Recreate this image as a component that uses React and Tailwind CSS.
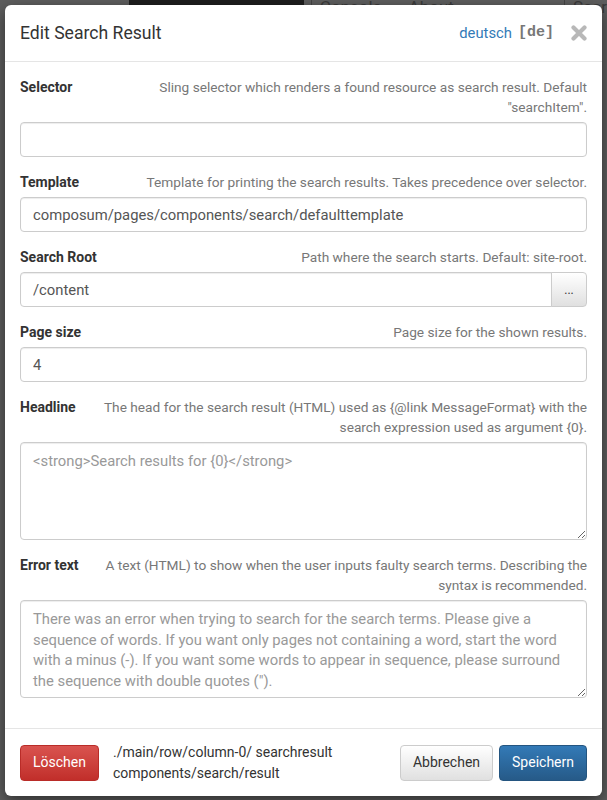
import React from "react";

const font = { fontFamily: "Roboto, 'Liberation Sans', sans-serif" };

// Label on the left, help text pushed to the right
function FieldLabel({ label, hint }) {
  return (
    <div className="flex items-start mb-[5px] leading-[20px]">
      <label className="font-bold text-[14px] text-[#333] shrink-0">{label}</label>
      <span className="flex-1 text-right text-[13.7px] text-[#777] ml-5">{hint}</span>
    </div>
  );
}

function TextInput({ value }) {
  return (
    <input
      type="text"
      defaultValue={value}
      className="block w-full h-[35px] px-3 text-[14.8px] text-[#555] bg-white border border-[#ccc] rounded-[4px] shadow-[inset_0_1px_1px_rgba(0,0,0,0.075)] outline-none"
    />
  );
}

function TextArea({ placeholder }) {
  return (
    <textarea
      placeholder={placeholder}
      className="block w-full h-[98px] px-3 pt-[8px] text-[14.8px] leading-[20.7px] text-[#555] placeholder:text-[#999] bg-white border border-[#ccc] rounded-[4px] shadow-[inset_0_1px_1px_rgba(0,0,0,0.075)] outline-none"
    />
  );
}

function CloseIcon() {
  return (
    <svg width="16" height="16" viewBox="0 0 16 16">
      <path d="M2.5 2.5 L13.5 13.5 M13.5 2.5 L2.5 13.5" stroke="#b8b8b8" strokeWidth="4.2" strokeLinecap="round" />
    </svg>
  );
}

export default function App() {
  return (
    <div className="w-[607px] h-[800px] bg-[#5e5e5e] overflow-hidden relative" style={font}>
      {/* dimmed page behind the dialog */}
      <div className="h-[14px] flex items-end text-[#3a3a3a] text-[17px] leading-[14px]">
        <div className="w-[140px]" />
        <div className="w-[190px] h-full bg-[#1e1e1e]" />
        <span className="ml-[7px] pl-[8px] border-l border-[#444]">Console</span>
        <span className="ml-[27px]">About</span>
        <span className="ml-[110px] pl-[8px] border-l border-[#444]">Sear</span>
      </div>

      <div className="absolute left-[5px] top-[5px] w-[597px] h-[791px] bg-white rounded-[6px] shadow-[0_5px_15px_rgba(0,0,0,0.5)] flex flex-col">
        {/* header */}
        <div className="flex items-center px-[15px] h-[57px] border-b border-[#e5e5e5]">
          <h4 className="text-[17.6px] text-[#333] flex-1">Edit Search Result</h4>
          <a className="text-[14.8px] text-[#337ab7] mr-[6px]">deutsch</a>
          <span className="text-[15px] font-bold text-[#777] mr-[17px]" style={{ fontFamily: "'Liberation Mono', monospace" }}>
            [de]
          </span>
          <CloseIcon />
        </div>

        {/* body */}
        <div className="px-[15px] pt-[15px] flex-1">
          <div className="mb-[15px]">
            <FieldLabel
              label="Selector"
              hint={'Sling selector which renders a found resource as search result. Default "searchItem".'}
            />
            <TextInput value="" />
          </div>
          <div className="mb-[15px]">
            <FieldLabel label="Template" hint="Template for printing the search results. Takes precedence over selector." />
            <TextInput value="composum/pages/components/search/defaulttemplate" />
          </div>
          <div className="mb-[15px]">
            <FieldLabel label="Search Root" hint="Path where the search starts. Default: site-root." />
            <div className="flex">
              <input
                type="text"
                defaultValue="/content"
                className="flex-1 h-[35px] px-3 text-[14.8px] text-[#555] border border-[#ccc] rounded-l-[4px] shadow-[inset_0_1px_1px_rgba(0,0,0,0.075)] outline-none"
              />
              <button className="w-[36px] h-[35px] -ml-px text-[12px] text-[#333] border border-[#ccc] rounded-r-[4px] bg-gradient-to-b from-white to-[#e0e0e0]">
                ...
              </button>
            </div>
          </div>
          <div className="mb-[15px]">
            <FieldLabel label="Page size" hint="Page size for the shown results." />
            <TextInput value="4" />
          </div>
          <div className="mb-[15px]">
            <FieldLabel
              label="Headline"
              hint="The head for the search result (HTML) used as {@link MessageFormat} with the search expression used as argument {0}."
            />
            <TextArea placeholder="<strong>Search results for {0}</strong>" />
          </div>
          <div className="mb-[15px]">
            <FieldLabel
              label="Error text"
              hint="A text (HTML) to show when the user inputs faulty search terms. Describing the syntax is recommended."
            />
            <TextArea placeholder={'There was an error when trying to search for the search terms. Please give a sequence of words. If you want only pages not containing a word, start the word with a minus (-). If you want some words to appear in sequence, please surround the sequence with double quotes (").'} />
          </div>
        </div>

        {/* footer */}
        <div className="flex items-center px-[15px] h-[68px] border-t border-[#e5e5e5]">
          <button className="h-[36px] px-3 text-[14px] text-white rounded-[4px] border border-[#b92c28] bg-gradient-to-b from-[#d9534f] to-[#c12e2a]">
            Löschen
          </button>
          <div className="ml-[14px] flex-1 text-[14px] leading-[21px] text-[#333]">
            <div>./main/row/column-0/ searchresult</div>
            <div>components/search/result</div>
          </div>
          <button className="h-[36px] px-3 text-[14px] text-[#333] rounded-[4px] border border-[#ccc] bg-gradient-to-b from-white to-[#e0e0e0]">
            Abbrechen
          </button>
          <button className="ml-[6px] h-[36px] px-3 text-[14px] text-white rounded-[4px] border border-[#245580] bg-gradient-to-b from-[#337ab7] to-[#265a88]">
            Speichern
          </button>
        </div>
      </div>
    </div>
  );
}
